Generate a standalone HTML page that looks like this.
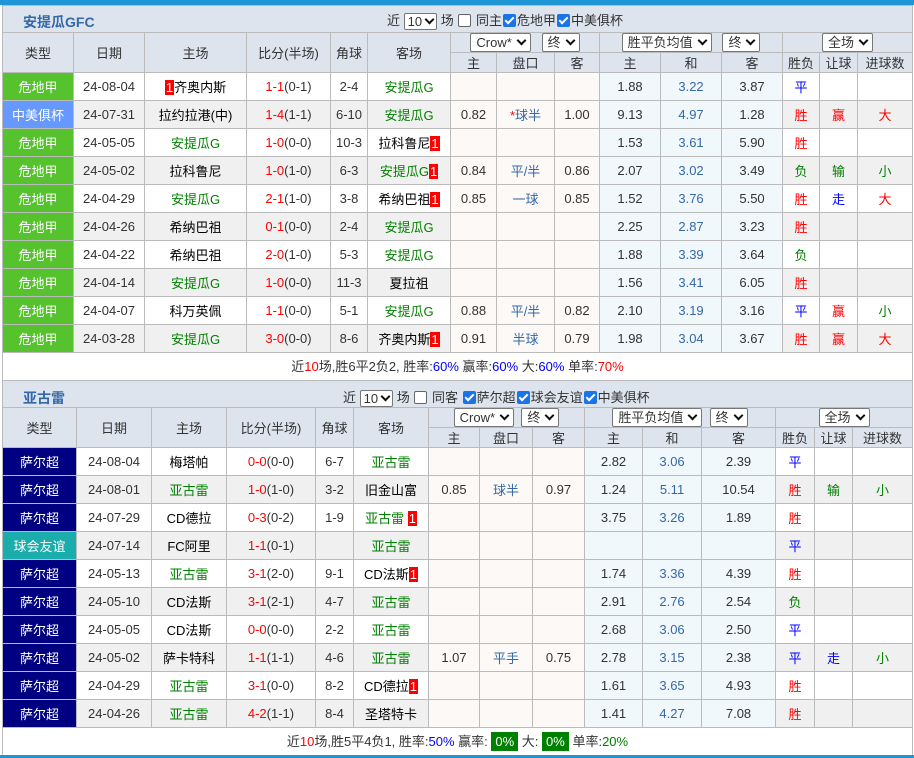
<!DOCTYPE html>
<html><head><meta charset="utf-8"><style>
*{box-sizing:border-box;margin:0;padding:0}
body{width:914px;height:758px;background:#fff;font-family:"Liberation Sans","Noto Sans CJK SC",sans-serif;font-size:13px;color:#333;position:relative;overflow:hidden}
.bar{position:absolute;left:0;width:914px;height:5px;background:#1e96d6}
.sec{position:absolute;left:2px;width:911px;background:#dde4ee;border:1px solid #bbb}
.tt{height:26px;position:relative}
.tt b{position:absolute;left:20px;top:6px;color:#3568a8;font-size:14px}
.tt .f{position:absolute;top:4px;font-size:13px;white-space:nowrap}
table{border-collapse:collapse;table-layout:fixed;width:910px;margin-left:-1px}
td{border:1px solid #bbb;text-align:center;white-space:nowrap;overflow:hidden;height:28px;padding:0}
.h td{height:20px;background:#dde4ee}
.h td.r2{height:40px}
.sel{display:inline-block;border:1px solid #777;border-radius:2px;background:#fff;height:19px;line-height:17px;padding:0 5px;font-size:13px;color:#333;vertical-align:middle}
.sel i{display:inline-block;width:7px;height:7px;border-right:2px solid #111;border-bottom:2px solid #111;transform:rotate(45deg);margin-left:6px;position:relative;top:-3px}
.cb{display:inline-block;width:13px;height:13px;border-radius:2px;vertical-align:-2px;margin:0 1px}
.cb.o{border:1px solid #666;background:#fff}
.cb.k{background:#1a73e8;position:relative}
.cb.k:after{content:"";position:absolute;left:4px;top:1px;width:3px;height:7px;border-right:2px solid #fff;border-bottom:2px solid #fff;transform:rotate(45deg)}
.w td{background:#fff}.g td{background:#f0f0f0}
td.a{background:#fcf9f6!important}td.e{background:#f0f8fc!important}
td.t{color:#fff!important}
.gr{background:#55c22e!important}.bl{background:#6699ff!important}.nv{background:#000080!important}.tl{background:#1bacac!important}
.G{color:#008000}.R{color:#f00}.B{color:#00f}.K{color:#000}.P{color:#3568a8}
.n{background:#f00;color:#fff;padding:0 1px}
.sum{height:28px;background:#fff;text-align:center;line-height:27px;font-size:13px}
.gb{background:#008000;color:#fff;padding:2px 4px}
</style></head><body>
<div class="bar" style="top:0"></div>

<div class="sec" style="top:5px">
<div class="tt"><b>安提瓜GFC</b><div class="f" style="left:384px">近 <span class="sel" style="height:17px;line-height:15px;padding:0 3px">10<i style="margin-left:4px"></i></span> 场 <span class="cb o"></span> 同主<span class="cb k"></span>危地甲<span class="cb k"></span>中美俱杯</div></div>
<table>
<colgroup><col style="width:71px"><col style="width:71px"><col style="width:102px"><col style="width:84px"><col style="width:37px"><col style="width:83px"><col style="width:46px"><col style="width:58px"><col style="width:45px"><col style="width:61px"><col style="width:61px"><col style="width:61px"><col style="width:37px"><col style="width:38px"><col style="width:55px"></colgroup>
<tr class="h"><td rowspan="2" class="r2">类型</td><td rowspan="2">日期</td><td rowspan="2">主场</td><td rowspan="2">比分(半场)</td><td rowspan="2">角球</td><td rowspan="2">客场</td><td colspan="3"><span class="sel">Crow*<i></i></span>&nbsp;&nbsp;&nbsp;<span class="sel">终<i></i></span></td><td colspan="3"><span class="sel">胜平负均值<i></i></span>&nbsp;&nbsp;&nbsp;<span class="sel">终<i></i></span></td><td colspan="3"><span class="sel">全场<i></i></span></td></tr>
<tr class="h"><td>主</td><td>盘口</td><td>客</td><td>主</td><td>和</td><td>客</td><td>胜负</td><td>让球</td><td>进球数</td></tr>
<tr class="w"><td class="t gr">危地甲</td><td>24-08-04</td><td class="K"><span class="n">1</span>齐奥内斯</td><td><span class="R">1-1</span>(0-1)</td><td>2-4</td><td class="G">安提瓜G</td><td class="a"></td><td class="a"></td><td class="a"></td><td class="e">1.88</td><td class="e P">3.22</td><td class="e">3.87</td><td class="B">平</td><td></td><td></td></tr>
<tr class="g"><td class="t bl">中美俱杯</td><td>24-07-31</td><td class="K">拉约拉港(中)</td><td><span class="R">1-4</span>(1-1)</td><td>6-10</td><td class="G">安提瓜G</td><td class="a">0.82</td><td class="a P"><span class="R">*</span>球半</td><td class="a">1.00</td><td class="e">9.13</td><td class="e P">4.97</td><td class="e">1.28</td><td class="R">胜</td><td class="R">赢</td><td class="R">大</td></tr>
<tr class="w"><td class="t gr">危地甲</td><td>24-05-05</td><td class="G">安提瓜G</td><td><span class="R">1-0</span>(0-0)</td><td>10-3</td><td class="K">拉科鲁尼<span class="n">1</span></td><td class="a"></td><td class="a"></td><td class="a"></td><td class="e">1.53</td><td class="e P">3.61</td><td class="e">5.90</td><td class="R">胜</td><td></td><td></td></tr>
<tr class="g"><td class="t gr">危地甲</td><td>24-05-02</td><td class="K">拉科鲁尼</td><td><span class="R">1-0</span>(1-0)</td><td>6-3</td><td class="G">安提瓜G<span class="n">1</span></td><td class="a">0.84</td><td class="a P">平/半</td><td class="a">0.86</td><td class="e">2.07</td><td class="e P">3.02</td><td class="e">3.49</td><td class="G">负</td><td class="G">输</td><td class="G">小</td></tr>
<tr class="w"><td class="t gr">危地甲</td><td>24-04-29</td><td class="G">安提瓜G</td><td><span class="R">2-1</span>(1-0)</td><td>3-8</td><td class="K">希纳巴祖<span class="n">1</span></td><td class="a">0.85</td><td class="a P">一球</td><td class="a">0.85</td><td class="e">1.52</td><td class="e P">3.76</td><td class="e">5.50</td><td class="R">胜</td><td class="B">走</td><td class="R">大</td></tr>
<tr class="g"><td class="t gr">危地甲</td><td>24-04-26</td><td class="K">希纳巴祖</td><td><span class="R">0-1</span>(0-0)</td><td>2-4</td><td class="G">安提瓜G</td><td class="a"></td><td class="a"></td><td class="a"></td><td class="e">2.25</td><td class="e P">2.87</td><td class="e">3.23</td><td class="R">胜</td><td></td><td></td></tr>
<tr class="w"><td class="t gr">危地甲</td><td>24-04-22</td><td class="K">希纳巴祖</td><td><span class="R">2-0</span>(1-0)</td><td>5-3</td><td class="G">安提瓜G</td><td class="a"></td><td class="a"></td><td class="a"></td><td class="e">1.88</td><td class="e P">3.39</td><td class="e">3.64</td><td class="G">负</td><td></td><td></td></tr>
<tr class="g"><td class="t gr">危地甲</td><td>24-04-14</td><td class="G">安提瓜G</td><td><span class="R">1-0</span>(0-0)</td><td>11-3</td><td class="K">夏拉祖</td><td class="a"></td><td class="a"></td><td class="a"></td><td class="e">1.56</td><td class="e P">3.41</td><td class="e">6.05</td><td class="R">胜</td><td></td><td></td></tr>
<tr class="w"><td class="t gr">危地甲</td><td>24-04-07</td><td class="K">科万英佩</td><td><span class="R">1-1</span>(0-0)</td><td>5-1</td><td class="G">安提瓜G</td><td class="a">0.88</td><td class="a P">平/半</td><td class="a">0.82</td><td class="e">2.10</td><td class="e P">3.19</td><td class="e">3.16</td><td class="B">平</td><td class="R">赢</td><td class="G">小</td></tr>
<tr class="g"><td class="t gr">危地甲</td><td>24-03-28</td><td class="G">安提瓜G</td><td><span class="R">3-0</span>(0-0)</td><td>8-6</td><td class="K">齐奥内斯<span class="n">1</span></td><td class="a">0.91</td><td class="a P">半球</td><td class="a">0.79</td><td class="e">1.98</td><td class="e P">3.04</td><td class="e">3.67</td><td class="R">胜</td><td class="R">赢</td><td class="R">大</td></tr>
</table>
<div class="sum">近<span class="R">10</span>场,胜6平2负2, 胜率:<span class="B">60%</span> 赢率:<span class="B">60%</span> 大:<span class="B">60%</span> 单率:<span class="R">70%</span></div>
</div>

<div class="sec" style="top:380px">
<div class="tt"><b style="top:7px">亚古雷</b><div class="f" style="left:340px;top:6px">近 <span class="sel" style="height:17px;line-height:15px;padding:0 3px">10<i style="margin-left:4px"></i></span> 场 <span class="cb o"></span> 同客 <span class="cb k"></span>萨尔超<span class="cb k"></span>球会友谊<span class="cb k"></span>中美俱杯</div></div>
<table>
<colgroup><col style="width:74px"><col style="width:75px"><col style="width:75px"><col style="width:89px"><col style="width:38px"><col style="width:75px"><col style="width:51px"><col style="width:53px"><col style="width:52px"><col style="width:58px"><col style="width:59px"><col style="width:74px"><col style="width:39px"><col style="width:38px"><col style="width:60px"></colgroup>
<tr class="h"><td rowspan="2" class="r2">类型</td><td rowspan="2">日期</td><td rowspan="2">主场</td><td rowspan="2">比分(半场)</td><td rowspan="2">角球</td><td rowspan="2">客场</td><td colspan="3"><span class="sel">Crow*<i></i></span>&nbsp;&nbsp;<span class="sel">终<i></i></span></td><td colspan="3"><span class="sel">胜平负均值<i></i></span>&nbsp;&nbsp;<span class="sel">终<i></i></span></td><td colspan="3"><span class="sel">全场<i></i></span></td></tr>
<tr class="h"><td>主</td><td>盘口</td><td>客</td><td>主</td><td>和</td><td>客</td><td>胜负</td><td>让球</td><td>进球数</td></tr>
<tr class="w"><td class="t nv">萨尔超</td><td>24-08-04</td><td class="K">梅塔帕</td><td><span class="R">0-0</span>(0-0)</td><td>6-7</td><td class="G">亚古雷</td><td class="a"></td><td class="a"></td><td class="a"></td><td class="e">2.82</td><td class="e P">3.06</td><td class="e">2.39</td><td class="B">平</td><td></td><td></td></tr>
<tr class="g"><td class="t nv">萨尔超</td><td>24-08-01</td><td class="G">亚古雷</td><td><span class="R">1-0</span>(1-0)</td><td>3-2</td><td class="K">旧金山富</td><td class="a">0.85</td><td class="a P">球半</td><td class="a">0.97</td><td class="e">1.24</td><td class="e P">5.11</td><td class="e">10.54</td><td class="R">胜</td><td class="G">输</td><td class="G">小</td></tr>
<tr class="w"><td class="t nv">萨尔超</td><td>24-07-29</td><td class="K">CD德拉</td><td><span class="R">0-3</span>(0-2)</td><td>1-9</td><td class="G">亚古雷 <span class="n">1</span></td><td class="a"></td><td class="a"></td><td class="a"></td><td class="e">3.75</td><td class="e P">3.26</td><td class="e">1.89</td><td class="R">胜</td><td></td><td></td></tr>
<tr class="g"><td class="t tl">球会友谊</td><td>24-07-14</td><td class="K">FC阿里</td><td><span class="R">1-1</span>(0-1)</td><td></td><td class="G">亚古雷</td><td class="a"></td><td class="a"></td><td class="a"></td><td class="e"></td><td class="e"></td><td class="e"></td><td class="B">平</td><td></td><td></td></tr>
<tr class="w"><td class="t nv">萨尔超</td><td>24-05-13</td><td class="G">亚古雷</td><td><span class="R">3-1</span>(2-0)</td><td>9-1</td><td class="K">CD法斯<span class="n">1</span></td><td class="a"></td><td class="a"></td><td class="a"></td><td class="e">1.74</td><td class="e P">3.36</td><td class="e">4.39</td><td class="R">胜</td><td></td><td></td></tr>
<tr class="g"><td class="t nv">萨尔超</td><td>24-05-10</td><td class="K">CD法斯</td><td><span class="R">3-1</span>(2-1)</td><td>4-7</td><td class="G">亚古雷</td><td class="a"></td><td class="a"></td><td class="a"></td><td class="e">2.91</td><td class="e P">2.76</td><td class="e">2.54</td><td class="G">负</td><td></td><td></td></tr>
<tr class="w"><td class="t nv">萨尔超</td><td>24-05-05</td><td class="K">CD法斯</td><td><span class="R">0-0</span>(0-0)</td><td>2-2</td><td class="G">亚古雷</td><td class="a"></td><td class="a"></td><td class="a"></td><td class="e">2.68</td><td class="e P">3.06</td><td class="e">2.50</td><td class="B">平</td><td></td><td></td></tr>
<tr class="g"><td class="t nv">萨尔超</td><td>24-05-02</td><td class="K">萨卡特科</td><td><span class="R">1-1</span>(1-1)</td><td>4-6</td><td class="G">亚古雷</td><td class="a">1.07</td><td class="a P">平手</td><td class="a">0.75</td><td class="e">2.78</td><td class="e P">3.15</td><td class="e">2.38</td><td class="B">平</td><td class="B">走</td><td class="G">小</td></tr>
<tr class="w"><td class="t nv">萨尔超</td><td>24-04-29</td><td class="G">亚古雷</td><td><span class="R">3-1</span>(0-0)</td><td>8-2</td><td class="K">CD德拉<span class="n">1</span></td><td class="a"></td><td class="a"></td><td class="a"></td><td class="e">1.61</td><td class="e P">3.65</td><td class="e">4.93</td><td class="R">胜</td><td></td><td></td></tr>
<tr class="g"><td class="t nv">萨尔超</td><td>24-04-26</td><td class="G">亚古雷</td><td><span class="R">4-2</span>(1-1)</td><td>8-4</td><td class="K">圣塔特卡</td><td class="a"></td><td class="a"></td><td class="a"></td><td class="e">1.41</td><td class="e P">4.27</td><td class="e">7.08</td><td class="R">胜</td><td></td><td></td></tr>
</table>
<div class="sum">近<span class="R">10</span>场,胜5平4负1, 胜率:<span class="B">50%</span> 赢率: <span class="gb">0%</span> 大: <span class="gb">0%</span> 单率:<span class="G">20%</span></div>
</div>
<div class="bar" style="top:755px;height:3px"></div>
</body></html>
